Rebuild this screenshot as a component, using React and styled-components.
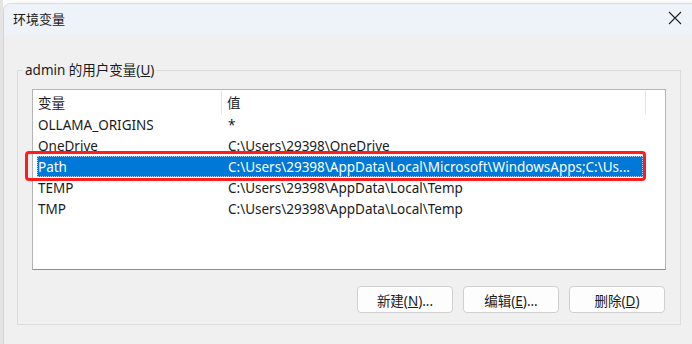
import React from 'react'
import styled, { createGlobalStyle } from 'styled-components';

const GlobalStyle = createGlobalStyle`
  html, body {
    margin: 0;
    padding: 0;
    background: #f3f3f3;
  }
  body {
    font-family: "Noto Sans", "Noto Sans CJK SC", sans-serif;
    font-size: 13.5px;
    color: #1b1b1b;
  }
`

const rows = [
    { name: 'OLLAMA_ORIGINS', value: '*' },
    { name: 'OneDrive', value: 'C:\\Users\\29398\\OneDrive' },
    { name: 'Path', value: 'C:\\Users\\29398\\AppData\\Local\\Microsoft\\WindowsApps;C:\\Us...', selected: true },
    { name: 'TEMP', value: 'C:\\Users\\29398\\AppData\\Local\\Temp' },
    { name: 'TMP', value: 'C:\\Users\\29398\\AppData\\Local\\Temp' },
];

const App = () => {
    return (
        <Desktop>
            <GlobalStyle />
            <Dialog>
                <TitleBar>
                    <Title>环境变量</Title>
                    <CloseButton aria-label="close">
                        <svg width="14" height="14" viewBox="0 0 14 14">
                            <path d="M1 1 L13 13 M13 1 L1 13" stroke="#222" strokeWidth="1.1" fill="none" />
                        </svg>
                    </CloseButton>
                </TitleBar>
                <Body>
                    <Group>
                        <Legend>admin 的用户变量(<u>U</u>)</Legend>
                        <ListBox>
                            <Header>
                                <HeaderCell>变量</HeaderCell>
                                <HeaderCell>值</HeaderCell>
                                <HeaderRest />
                            </Header>
                            {rows.map((r) => (
                                <Row key={r.name} selected={r.selected}>
                                    <Cell>{r.name}</Cell>
                                    <Cell>{r.value}</Cell>
                                    {r.selected ? <Highlight /> : null}
                                </Row>
                            ))}
                        </ListBox>
                        <Buttons>
                            <Button>新建(<u>N</u>)...</Button>
                            <Button>编辑(<u>E</u>)...</Button>
                            <Button>删除(<u>D</u>)</Button>
                        </Buttons>
                    </Group>
                </Body>
            </Dialog>
        </Desktop>
    )
}

const Desktop = styled.div`
width: 692px;
height: 344px;
overflow: hidden;
padding: 3px 0 0 3px;
box-sizing: border-box;
background: linear-gradient(to right, #e4e4e4 0, #e4e4e4 3px, #fafafa 3px);
`

const Dialog = styled.div`
display: flex;
flex-direction: column;
height: 360px;
background: #f0f0f0;
border-top: 1px solid #dadde2;
border-left: 1px solid #d4d4d4;
border-top-left-radius: 8px;
overflow: hidden;
`

const TitleBar = styled.div`
height: 30px;
flex: none;
display: flex;
align-items: center;
justify-content: space-between;
padding: 0 9px 2px 9px;
box-sizing: border-box;
background: #eef3f9;
`

const Title = styled.div`
font-size: 13px;
color: #1a1a1a;
`

const CloseButton = styled.button`
background: none;
border: none;
padding: 0;
margin: 0;
width: 16px;
height: 16px;
display: flex;
align-items: center;
justify-content: center;
`

const Body = styled.div`
padding: 28px 11px 0 13px;
`

const Group = styled.fieldset`
margin: 0;
border: 1px solid #dcdcdc;
padding: 11px 14px 17px 14px;
height: 263px;
box-sizing: border-box;
`

const Legend = styled.legend`
padding: 0 2px;
margin-left: -9px;
font-size: 13.5px;
line-height: 16px;
color: #1b1b1b;
`

const ListBox = styled.div`
height: 181px;
box-sizing: border-box;
background: #fff;
border: 1px solid #b4b4b4;
border-bottom-color: #8f8f8f;
`

const Header = styled.div`
display: grid;
grid-template-columns: 189px 424px 1fr;
height: 24px;
`

const HeaderCell = styled.div`
display: flex;
align-items: center;
padding-left: 5px;
border-right: 1px solid #e5e5e5;
`

const HeaderRest = styled.div``

const Row = styled.div`
position: relative;
display: grid;
grid-template-columns: 185px 1fr;
height: 21px;
margin-left: 4px;
width: 606px;
align-items: center;
background: ${(p) => (p.selected ? '#0078d7' : 'transparent')};
color: ${(p) => (p.selected ? '#fff' : '#1b1b1b')};
outline: ${(p) => (p.selected ? '1px dotted #a8d0f2' : 'none')};
outline-offset: -1px;
`

const Cell = styled.div`
padding-left: 1px;
white-space: nowrap;
overflow: hidden;
&:nth-child(2) {
    padding-left: 6px;
}
`

const Highlight = styled.div`
position: absolute;
left: -12px;
top: -5px;
right: -3px;
bottom: -4px;
border: 3px solid #ff1c1c;
border-radius: 4px;
pointer-events: none;
`

const Buttons = styled.div`
display: flex;
justify-content: flex-end;
gap: 10px;
margin-top: 16px;
padding-right: 1px;
`

const Button = styled.button`
width: 96px;
height: 27px;
background: #fdfdfd;
border: 1px solid #d0d0d0;
border-radius: 4px;
font-family: "Noto Sans", "Noto Sans CJK SC", sans-serif;
font-size: 13.5px;
color: #1b1b1b;
padding: 0;
`

export default App;
